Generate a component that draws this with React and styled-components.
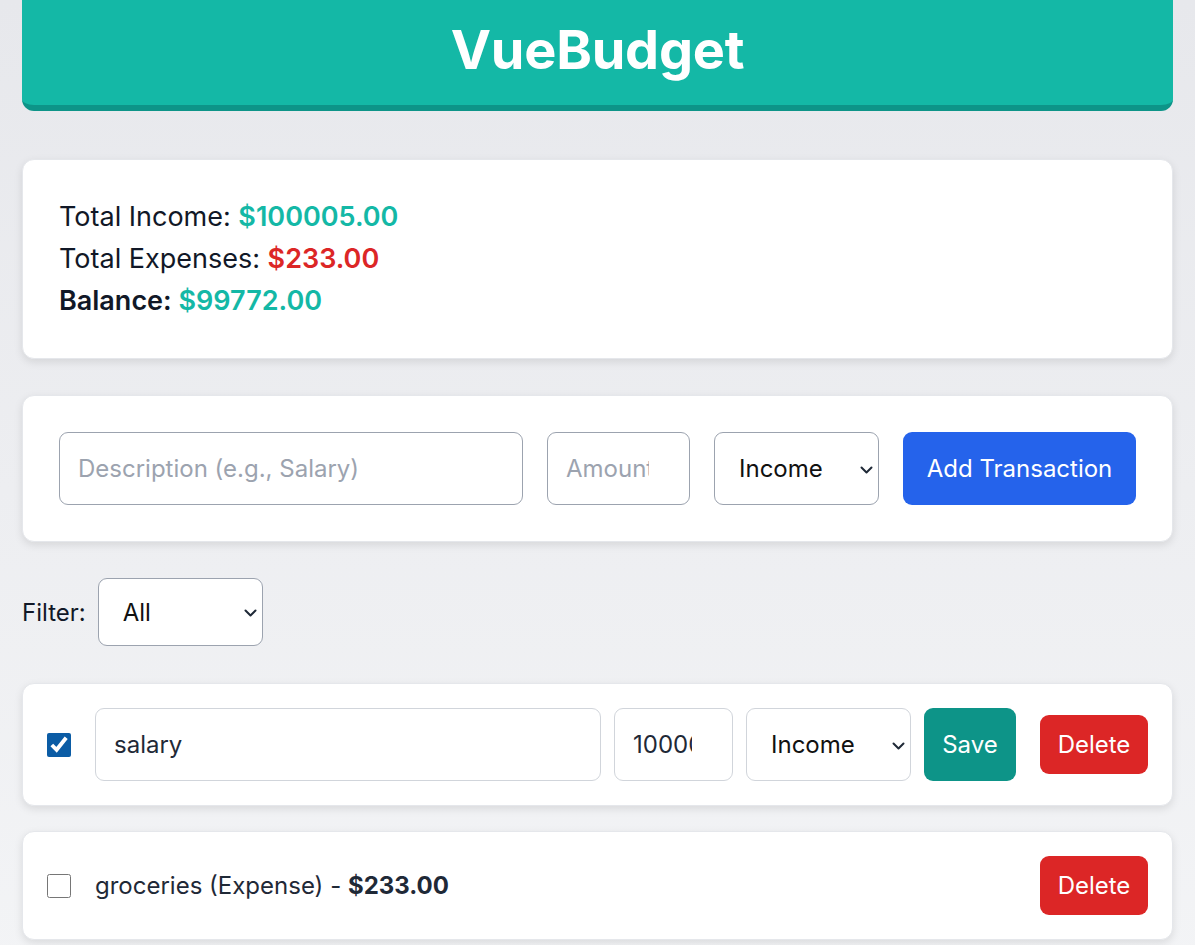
import React from 'react';
import styled, { createGlobalStyle } from 'styled-components';

const GlobalStyle = createGlobalStyle`
	* { box-sizing: border-box; }
	html, body {
		margin: 0;
		padding: 0;
	}
	body {
		font-family: Inter, 'Liberation Sans', sans-serif;
		background: linear-gradient(to bottom, #e7e8ec, #f3f4f6);
		min-height: 100vh;
		color: #111827;
	}
`;

const Page = styled.div`
	padding: 0 22px 40px;
`;

const Header = styled.header`
	background: #14b8a6;
	border-bottom: 6px solid #0d9488;
	border-radius: 0 0 12px 12px;
	height: 111px;
	display: flex;
	align-items: center;
	justify-content: center;
	margin-bottom: 48px;
`;

const Title = styled.h1`
	margin: 0 0 6px;
	color: #fff;
	font-size: 54px;
	font-weight: 700;
	letter-spacing: -0.2px;
`;

const Card = styled.div`
	background: #fff;
	border: 1px solid #e5e7eb;
	border-radius: 12px;
	box-shadow: 0 3px 8px rgba(0, 0, 0, 0.1);
	padding: ${({ $pad }) => $pad || '36px'};
	margin-bottom: ${({ $gap }) => $gap || '36px'};
`;

const SummaryLine = styled.div`
	font-size: 27px;
	line-height: 42px;
	font-weight: ${({ $bold }) => ($bold ? 600 : 400)};
	color: #111827;
`;

const Amount = styled.span`
	font-weight: 600;
	color: ${({ $tone }) => ($tone === 'red' ? '#dc2626' : '#14b8a6')};
`;

const FormRow = styled.form`
	display: flex;
	gap: 24px;
	align-items: center;
	margin: 0;
`;

const TextInput = styled.input`
	font-family: inherit;
	font-size: 24px;
	height: 73px;
	padding: 0 ${({ $num }) => ($num ? '40px' : '18px')} 0 18px;
	border: 1px solid ${({ $light }) => ($light ? '#d1d5db' : '#9ca3af')};
	border-radius: 9px;
	color: #1f2937;
	background: #fff;
	flex: ${({ $grow }) => ($grow ? 1 : 'none')};
	width: ${({ $w }) => ($w ? `${$w}px` : 'auto')};
	min-width: 0;
	outline: none;
	-moz-appearance: textfield;
	&::-webkit-outer-spin-button,
	&::-webkit-inner-spin-button {
		-webkit-appearance: none;
		margin: 0;
	}
	&::placeholder {
		color: #9ca3af;
	}
`;

const SelectWrap = styled.div`
	position: relative;
	flex: none;
	width: 165px;
	height: ${({ $h }) => $h || '73px'};
`;

const Select = styled.select`
	appearance: none;
	font-family: inherit;
	font-size: 24px;
	height: 100%;
	width: 100%;
	padding: 0 24px 0 24px;
	border: 1px solid ${({ $light }) => ($light ? '#d1d5db' : '#9ca3af')};
	border-radius: 9px;
	background: #fff;
	color: #111;
	outline: none;
`;

const Chevron = styled.svg`
	position: absolute;
	right: 6px;
	top: 50%;
	width: 13px;
	height: 8px;
	margin-top: -3px;
	pointer-events: none;
`;

const Button = styled.button`
	font-family: inherit;
	font-size: 24px;
	font-weight: 400;
	color: #fff;
	border: none;
	border-radius: 9px;
	background: ${({ $color }) => $color};
	height: ${({ $h }) => $h || '73px'};
	width: ${({ $w }) => $w};
	padding: 0;
	flex: none;
	cursor: pointer;
`;

const FilterRow = styled.div`
	display: flex;
	align-items: center;
	gap: 12px;
	margin-bottom: 37px;
`;

const FilterLabel = styled.label`
	font-size: 24px;
	color: #111827;
`;

const ItemRow = styled.div`
	display: flex;
	align-items: center;
	gap: 24px;
`;

const Check = styled.input`
	width: 24px;
	height: 24px;
	margin: 0;
	flex: none;
	accent-color: #0b5ca5;
`;

const EditGroup = styled.div`
	flex: 1;
	display: flex;
	gap: 13px;
	align-items: center;
	min-width: 0;
`;

const ItemText = styled.span`
	flex: 1;
	font-size: 24px;
	color: #1f2937;
	b {
		font-weight: 700;
	}
`;

const TypeSelect = ({ h, light, options, value }) => (
	<SelectWrap $h={h}>
		<Select $light={light} defaultValue={value}>
			{options.map((o) => (
				<option key={o} value={o.toLowerCase()}>
					{o}
				</option>
			))}
		</Select>
		<Chevron viewBox="0 0 13 8" fill="none">
			<path d="M1.5 1.5 L6.5 6.5 L11.5 1.5" stroke="#1f2937" strokeWidth="2" strokeLinecap="round" strokeLinejoin="round" />
		</Chevron>
	</SelectWrap>
);

export default function App() {
	return (
		<>
			<GlobalStyle />
			<Page>
				<Header>
					<Title>VueBudget</Title>
				</Header>

				<Card>
					<SummaryLine>
						Total Income: <Amount>$100005.00</Amount>
					</SummaryLine>
					<SummaryLine>
						Total Expenses: <Amount $tone="red">$233.00</Amount>
					</SummaryLine>
					<SummaryLine $bold>
						Balance: <Amount>$99772.00</Amount>
					</SummaryLine>
				</Card>

				<Card>
					<FormRow onSubmit={(e) => e.preventDefault()}>
						<TextInput $grow placeholder="Description (e.g., Salary)" />
						<TextInput $w={143} $num type="number" placeholder="Amount" />
						<TypeSelect options={['Income', 'Expense']} value="income" />
						<Button $color="#2563eb" $w="233px" type="submit">
							Add Transaction
						</Button>
					</FormRow>
				</Card>

				<FilterRow>
					<FilterLabel>Filter:</FilterLabel>
					<TypeSelect h="68px" options={['All', 'Income', 'Expense']} value="all" />
				</FilterRow>

				<Card $pad="24px" $gap="25px">
					<ItemRow>
						<Check type="checkbox" defaultChecked />
						<EditGroup>
							<TextInput $grow $light defaultValue="salary" />
							<TextInput $w={119} $num $light type="number" defaultValue="100005" />
							<TypeSelect light options={['Income', 'Expense']} value="income" />
							<Button $color="#0d9488" $w="92px">Save</Button>
						</EditGroup>
						<Button $color="#dc2626" $h="59px" $w="108px">Delete</Button>
					</ItemRow>
				</Card>

				<Card $pad="24px" $gap="0">
					<ItemRow>
						<Check type="checkbox" />
						<ItemText>
							groceries (Expense) - <b>$233.00</b>
						</ItemText>
						<Button $color="#dc2626" $h="59px" $w="108px">Delete</Button>
					</ItemRow>
				</Card>
			</Page>
		</>
	);
}
